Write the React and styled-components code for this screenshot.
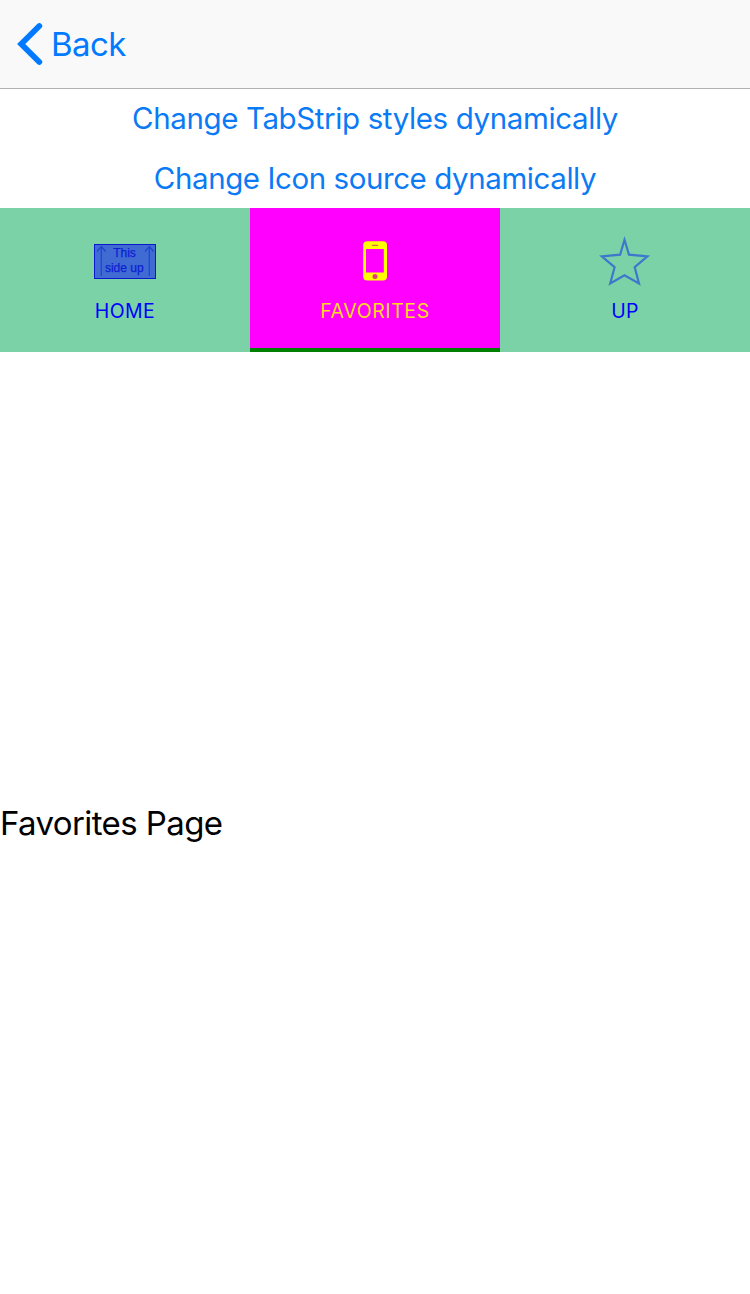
import React from "react";
import styled, { createGlobalStyle } from "styled-components";

const GlobalStyle = createGlobalStyle`
  body {
    margin: 0;
    background: #fff;
    font-family: Inter, "Liberation Sans", sans-serif;
  }
`;

const Screen = styled.div`
  display: flex;
  flex-direction: column;
  width: 750px;
  height: 1294px;
  overflow: hidden;
`;

const NavBar = styled.header`
  display: flex;
  align-items: center;
  box-sizing: border-box;
  height: 89px;
  flex: none;
  padding-left: 17px;
  background: #f9f9f9;
  border-bottom: 1px solid #b2b2b2;
`;

const BackButton = styled.button`
  display: flex;
  align-items: center;
  gap: 8px;
  padding: 0;
  border: 0;
  background: none;
  color: #007aff;
  font: 400 33px/40px Inter, sans-serif;
  letter-spacing: -0.6px;
`;

const Action = styled.button`
  height: ${(p) => p.$height}px;
  flex: none;
  padding: 0;
  border: 0;
  background: none;
  color: #0a7af5;
  font: 400 29.5px/${(p) => p.$height}px Inter, sans-serif;
  letter-spacing: ${(p) => p.$tracking}px;
`;

const TabStrip = styled.nav`
  display: grid;
  grid-template-columns: repeat(3, 1fr);
  height: 144px;
  flex: none;
`;

const Tab = styled.button`
  display: flex;
  flex-direction: column;
  align-items: center;
  box-sizing: border-box;
  padding: 27px 0 0;
  border: 0;
  border-bottom: 4px solid ${(p) => (p.$selected ? "#008000" : "#7ad2a6")};
  background: ${(p) => (p.$selected ? "#ff00ff" : "#7ad2a6")};
  color: ${(p) => (p.$selected ? "#ffdc1e" : "#0000ff")};
`;

const TabLabel = styled.span`
  margin-top: 12px;
  font: 400 19.5px/24px Inter, sans-serif;
  letter-spacing: ${(p) => p.$tracking}px;
`;

const Icon = styled.svg`
  display: block;
  flex: none;
`;

const Page = styled.main`
  display: flex;
  align-items: center;
  flex: 1;
  font-size: 33px;
  line-height: 40px;
  letter-spacing: -0.6px;
  color: #000;
`;

const BackIcon = () => (
  <Icon width="26" height="44" viewBox="0 0 26 44">
    <path d="M22.3 4 4.2 22 22.3 40" fill="none" stroke="#007aff" strokeWidth="5.8" strokeLinecap="round" />
  </Icon>
);

const BoxIcon = () => (
  <Icon width="64" height="52" viewBox="0 0 64 52">
    <rect x="1.5" y="9.5" width="61" height="34" fill="#3f6bd3" stroke="#0a19d0" />
    <g fill="none" stroke="#2144d2" strokeWidth="1.2">
      <path d="M8.3 41V12M4 16.5 8.3 11.5 12.6 16.5" />
      <path d="M56.3 41V12M52 16.5 56.3 11.5 60.6 16.5" />
    </g>
    <g fill="#0d1fd4" stroke="#0d1fd4" strokeWidth="0.25" fontFamily="Liberation Sans, sans-serif" fontSize="12" textAnchor="middle">
      <text x="31.5" y="22.3">This</text>
      <text x="31.3" y="36.5">side up</text>
    </g>
  </Icon>
);

const PhoneIcon = () => (
  <Icon width="64" height="52" viewBox="0 0 64 52">
    <rect x="20.2" y="6.2" width="23.8" height="39.2" rx="4" fill="#ffff00" />
    <rect x="23" y="14" width="17.8" height="23.5" fill="#ff00ff" />
    <path d="M29.5 10.4h5" stroke="#d8684c" strokeWidth="1.3" strokeLinecap="round" />
    <circle cx="32" cy="41.4" r="2.5" fill="#e83a78" />
  </Icon>
);

const StarIcon = () => (
  <Icon width="64" height="52" viewBox="0 0 64 52">
    <path
      d="M31.5 4.8 36 19.7 54.4 21.3 41.7 32.2 46 48.4 31.5 40.2 17.2 48.4 21.6 32.2 8.8 21.3 27.1 19.7Z"
      fill="none"
      stroke="#3d78cc"
      strokeWidth="2.2"
    />
  </Icon>
);

const tabs = [
  { label: "HOME", icon: <BoxIcon />, tracking: 0.4 },
  { label: "FAVORITES", icon: <PhoneIcon />, tracking: 0.6, selected: true },
  { label: "UP", icon: <StarIcon />, tracking: 0.2 },
];

export default function App() {
  return (
    <>
      <GlobalStyle />
      <Screen>
        <NavBar>
          <BackButton>
            <BackIcon />
            Back
          </BackButton>
        </NavBar>
        <Action $height={59} $tracking={-0.38}>Change TabStrip styles dynamically</Action>
        <Action $height={60} $tracking={-0.42}>Change Icon source dynamically</Action>
        <TabStrip>
          {tabs.map((tab) => (
            <Tab key={tab.label} $selected={tab.selected}>
              {tab.icon}
              <TabLabel $tracking={tab.tracking}>{tab.label}</TabLabel>
            </Tab>
          ))}
        </TabStrip>
        <Page>Favorites Page</Page>
      </Screen>
    </>
  );
}
